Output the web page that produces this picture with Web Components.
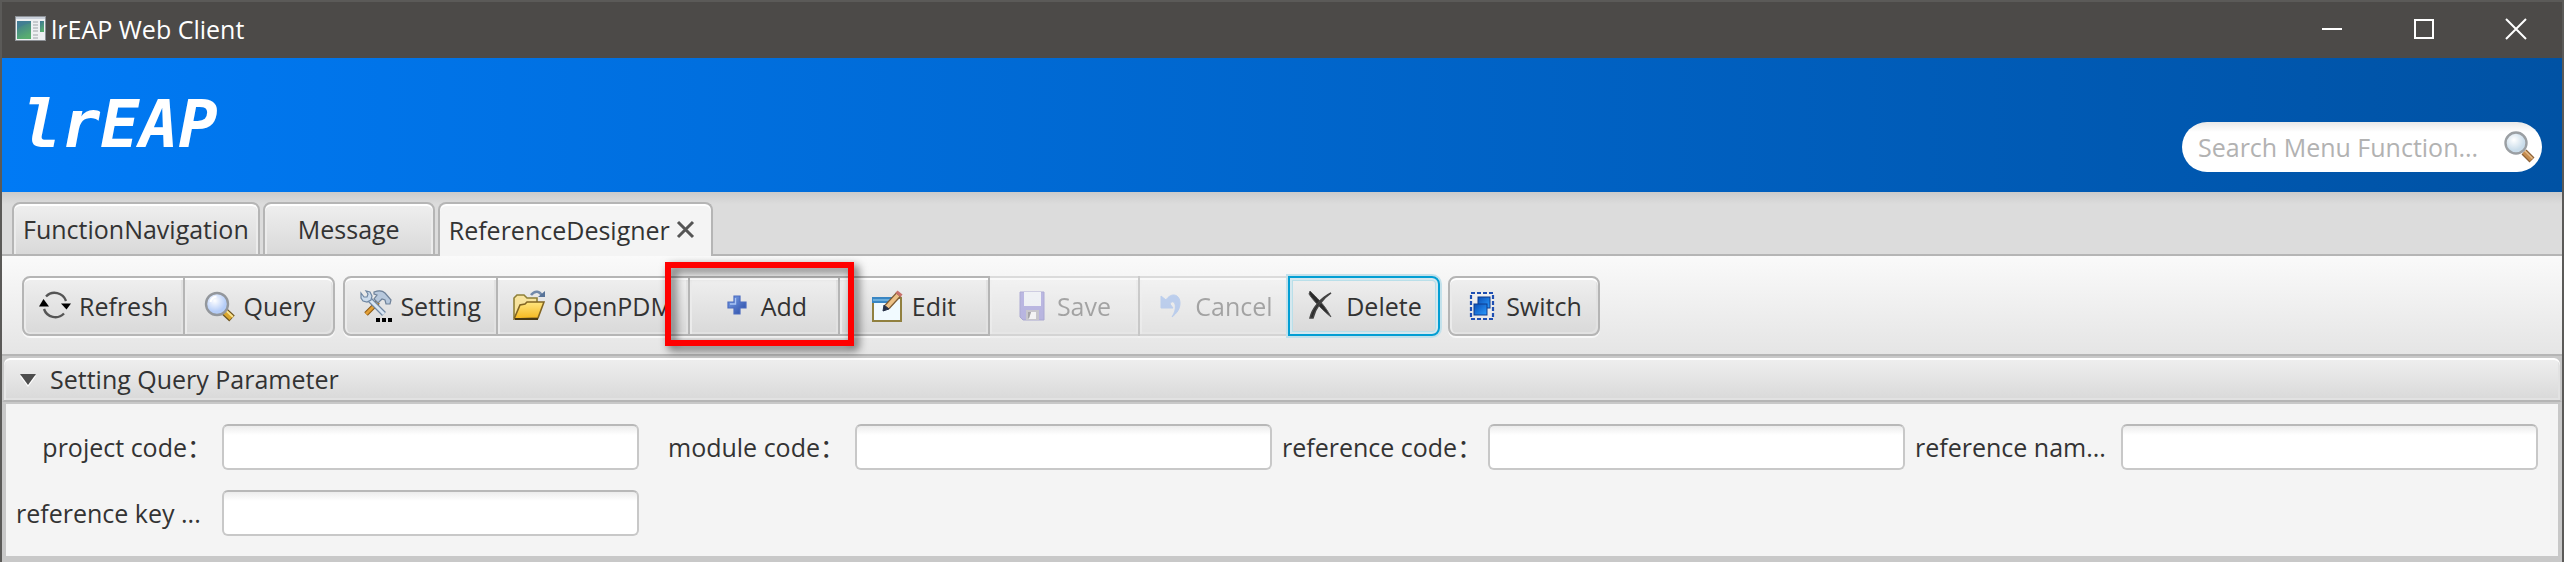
<!DOCTYPE html>
<html lang="en">
<head>
<meta charset="utf-8">
<title>lrEAP Web Client</title>
<style>
    body {
        margin: 0;
        background: #c8c8c8;
        color: #333;
        font: 25px/32px "Open Sans", "Noto Sans CJK SC", sans-serif;
    }
</style>
</head>
<body>
<app-window>
    <title-bar>lrEAP Web Client</title-bar>
    <brand-header>
        lrEAP
        <search-box slot="search" placeholder="Search Menu Function..."></search-box>
    </brand-header>
    <tab-strip>
        <tab-item>FunctionNavigation</tab-item>
        <tab-item>Message</tab-item>
        <tab-item active closable>ReferenceDesigner</tab-item>
    </tab-strip>
    <tool-bar>
        <button-group>
            <tool-button icon="refresh">Refresh</tool-button>
            <tool-button icon="query">Query</tool-button>
        </button-group>
        <button-group>
            <tool-button icon="setting">Setting</tool-button>
            <tool-button icon="open">OpenPDM</tool-button>
            <call-out><tool-button icon="add">Add</tool-button></call-out>
            <tool-button icon="edit">Edit</tool-button>
            <tool-button icon="save" disabled>Save</tool-button>
            <tool-button icon="cancel" disabled>Cancel</tool-button>
            <tool-button icon="delete" focused>Delete</tool-button>
        </button-group>
        <button-group>
            <tool-button icon="switch">Switch</tool-button>
        </button-group>
    </tool-bar>
    <titled-pane heading="Setting Query Parameter">
        <form-field label="project code："></form-field>
        <form-field label="module code："></form-field>
        <form-field label="reference code："></form-field>
        <form-field label="reference nam..." clipped></form-field>
        <form-field label="reference key ..." clipped></form-field>
    </titled-pane>
</app-window>

<script>
// Icon drawings, all on a 32x32 grid
const ICONS = {
    app: `
        <rect x="0.5" y="3.5" width="30" height="24" fill="#eef0f2" stroke="#8d9196"/>
        <rect x="1" y="4" width="29" height="2" fill="#c9d0da"/>
        <linearGradient id="a" x2="0.4" y2="1"><stop stop-color="#3d7595"/><stop offset="1" stop-color="#58ad70"/></linearGradient>
        <rect x="2" y="8" width="14" height="18" fill="url(#a)"/>
        <path d="M2 17C5 13 9 11 16 10V8H2z" fill="#417c95" opacity="0.7"/>
        <path d="M18 9h5M18 12h5M18 15h5M18 18h5M18 22h5M18 25h5" stroke="#b9bdc1" stroke-width="1.5"/>
        <rect x="25" y="8" width="4" height="11" fill="url(#a)"/>`,
    refresh: `
        <g fill="none" stroke="#555" stroke-width="2.4">
            <path d="M7 6.500A12 12 0 0 1 27 11"/>
            <path d="M25 23.500A12 12 0 0 1 5 19"/>
        </g>
        <path d="M22 13.500h10l-4.500 6z" fill="#000"/>
        <path d="M0 16.500h10L4.500 9z" fill="#000"/>`,
    query: `
        <radialGradient id="q" cx="0.4" cy="0.35"><stop stop-color="#fff"/><stop offset="1" stop-color="#b5cdf8"/></radialGradient>
        <path d="M20.500 21.500l7.500 7" stroke="#6e5520" stroke-width="8"/>
        <path d="M20.500 21.500l7 6.500" stroke="#d9a62e" stroke-width="5.5"/>
        <path d="M21 19.500l8 7.500" stroke="#fae391" stroke-width="1.8"/>
        <circle cx="13" cy="14" r="11" fill="url(#q)" stroke="#93979c" stroke-width="2.4"/>
        <path d="M6.500 12a7 7 0 0 1 6-5.500" fill="none" stroke="#fff" stroke-width="2"/>`,
    search: `
        <radialGradient id="s" cx="0.4" cy="0.35"><stop stop-color="#fff"/><stop offset="1" stop-color="#c9dcea"/></radialGradient>
        <path d="M20 21l8 8" stroke="#8d6238" stroke-width="7"/>
        <path d="M20 21l7.500 7.500" stroke="#c68d50" stroke-width="4.5"/>
        <path d="M20.500 19.500l8 8" stroke="#e6bd8c" stroke-width="1.5"/>
        <circle cx="12" cy="12" r="10.500" fill="url(#s)" stroke="#9b9fa3" stroke-width="2.4"/>`,
    setting: `
        <path d="M18 12L6 24" stroke="#8d5a14" stroke-width="5"/>
        <path d="M18 12L6 24" stroke="#e3a037" stroke-width="2.800"/>
        <path d="M14 2c5-2 8-2 11 1l6 7-1 4h-4l-1-4-3-1-4 4-4-4 3-4-3-1z" fill="#b7c8dc" stroke="#6f8299" stroke-width="1.200"/>
        <path d="M9 9l15 15" stroke="#6f87a3" stroke-width="5.500"/>
        <path d="M9 9l15 15" stroke="#d9e6f3" stroke-width="3"/>
        <path d="M1 3l3 4h3l1-3-2-3 4 1 2 4-1 4-4 2-4-1-2-3z" fill="#cbdbec" stroke="#6f87a3" stroke-width="1.200"/>
        <path d="M16 28h4v4h-4zM22 28h4v4h-4zM28 28h4v4h-4z" fill="#000"/>`,
    open: `
        <linearGradient id="o" x2="0" y2="1"><stop stop-color="#ffe680"/><stop offset="1" stop-color="#f5b71c"/></linearGradient>
        <path d="M1 28V8l3-3h7l3 3h10v8" fill="#f7e39d" stroke="#8f8038" stroke-width="1.600"/>
        <path d="M1 29l6-14 5-1 2-2h17l-6 16z" fill="url(#o)" stroke="#826522" stroke-width="1.600"/>
        <path d="M2 29h23" stroke="#493913" stroke-width="2"/>
        <path d="M18 5c4-5 9-4 11 1" fill="none" stroke="#7189aa" stroke-width="2.600"/>
        <path d="M25 7h7V1z" fill="#587398"/>`,
    add: `
        <linearGradient id="p" x2="1" y2="1"><stop stop-color="#7da4ea"/><stop offset="1" stop-color="#2748a4"/></linearGradient>
        <path d="M13 6h6v6h6v6h-6v6h-6v-6H7v-6h6z" fill="url(#p)" stroke="#4c6cc0" stroke-width="1.200"/>
        <path d="M14.500 8v6H9" fill="none" stroke="#a8c3f4" stroke-width="1.400"/>`,
    edit: `
        <rect x="1" y="8" width="28" height="23" fill="#f1faff" stroke="#91803f" stroke-width="2"/>
        <rect x="0" y="7" width="22" height="6" fill="#3986c3"/>
        <path d="M1 10h21" stroke="#7dbbe4" stroke-width="1.500"/>
        <path d="M15 17L27 4" stroke="#7f5b32" stroke-width="6.500"/>
        <path d="M15 17L26 5" stroke="#edc187" stroke-width="4"/>
        <path d="M26 5l2-2.500" stroke="#c8716b" stroke-width="6.500"/>
        <path d="M11 21l1-6 5 4z" fill="#252f45" stroke="#252f45"/>`,
    save: `
        <path d="M3 2h24v28H6l-3-3z" fill="#6a62cc" stroke="#4a45a8"/>
        <path d="M7 2h17v14H7z" fill="#edf1fb"/>
        <path d="M9 20h13v10H9z" fill="#918e9b"/>
        <path d="M14 22l5 0v7h-7z" fill="#fff"/>
        <path d="M11 22h3l-2 6h-1z" fill="#3a383f"/>`,
    cancel: `
        <path d="M11 10c5-8 14-6 14 3 0 6-3 10-8 14 3-5 4-9 3-13-1-3-4-3-5 0l3 4H6V6z" fill="#6f9ce8" stroke="#6f9ce8"/>`,
    delete: `
        <path d="M4 1c6 6 15 14 21 26-6-5-17-15-22-23z" fill="#2b2b2b" stroke="#555"/>
        <path d="M25 3C16 9 9 19 7 28l-3 0C6 18 15 8 25 3z" fill="#2b2b2b" stroke="#444" stroke-width="1.500"/>`,
    switch: `
        <linearGradient id="w" x2="1" y2="1"><stop stop-color="#0c4eb4"/><stop offset="1" stop-color="#2a9cff"/></linearGradient>
        <rect x="5" y="3" width="22" height="26" fill="#fff" fill-opacity="0.3" stroke="#1f4fb2" stroke-width="2.200" stroke-dasharray="4 2"/>
        <rect x="12" y="7" width="12" height="11" fill="url(#w)" stroke="#0e3c8f"/>
        <rect x="8" y="14" width="13" height="11" fill="url(#w)" stroke="#0e3c8f"/>`,
    minimize: `<path d="M6 16h20" stroke="#fff" stroke-width="2"/>`,
    maximize: `<path d="M7 7h18v18H7z" fill="none" stroke="#fff" stroke-width="2"/>`,
    close: `<path d="M6 6l20 20M26 6L6 26" stroke="#fff" stroke-width="2"/>`,
    cross: `<path d="M8 8l15 15M23 8L8 23" stroke="#555" stroke-width="3"/>`,
    arrow: `<path d="M8 13h16l-8 11z" fill="#fff"/><path d="M8 11h16l-8 11z" fill="#4d4d4d"/>`
};

// Base class: puts the markup of render() into an open shadow root
class BaseElement extends HTMLElement {
    constructor() {
        super();
        this.attachShadow({ mode: 'open' });
    }

    connectedCallback() {
        this.shadowRoot.innerHTML = this.render();
    }
}

class AppIcon extends BaseElement {
    render() {
        return `
        <style>
        :host { display: block; flex: none; width: 32px; height: 32px; }
        svg { display: block; width: 100%; height: 100%; }
        </style>
        <svg viewBox="0 0 32 32" aria-hidden="true">${ICONS[this.getAttribute('name')]}</svg>`;
    }
}

class AppWindow extends BaseElement {
    render() {
        return `
        <style>
        :host {
            display: block;
            min-height: 100vh;
            box-sizing: border-box;
            border: 2px solid #5b5a58;
            border-bottom: 0;
        }
        </style>
        <slot></slot>`;
    }
}

class TitleBar extends BaseElement {
    render() {
        return `
        <style>
        :host {
            display: flex;
            height: 56px;
            background: #4c4a48;
            color: #fff;
        }
        .title {
            display: flex;
            flex: 1;
            align-items: center;
            gap: 4px;
            padding: 0 0 2px 13px;
        }
        button {
            display: grid;
            place-items: center;
            width: 92px;
            padding: 0 0 2px;
            border: 0;
            background: none;
        }
        </style>
        <div class="title"><app-icon name="app"></app-icon><span><slot></slot></span></div>
        <button aria-label="Minimize"><app-icon name="minimize"></app-icon></button>
        <button aria-label="Maximize"><app-icon name="maximize"></app-icon></button>
        <button aria-label="Close"><app-icon name="close"></app-icon></button>`;
    }
}

class BrandHeader extends BaseElement {
    render() {
        return `
        <style>
        :host {
            display: flex;
            justify-content: space-between;
            align-items: center;
            height: 134px;
            padding: 0 20px;
            box-sizing: border-box;
            background: linear-gradient(90deg, #007af5, #0052a4);
        }
        h1 {
            margin: 0;
            color: #fff;
            font: italic bold 65px/72px "DejaVu Sans Mono", monospace;
        }
        ::slotted(search-box) { align-self: flex-end; margin-bottom: 20px; }
        </style>
        <h1><slot></slot></h1>
        <slot name="search"></slot>`;
    }
}

class SearchBox extends BaseElement {
    render() {
        const text = this.getAttribute('placeholder');
        return `
        <style>
        :host {
            display: flex;
            align-items: center;
            width: 360px;
            height: 50px;
            padding: 0 6px 0 16px;
            box-sizing: border-box;
            border-radius: 25px;
            background: linear-gradient(#e8e8e8, #fff 10px);
        }
        input {
            flex: 1;
            min-width: 0;
            padding: 0;
            border: 0;
            outline: 0;
            background: none;
            font: inherit;
        }
        input::placeholder { color: #b2b2b2; opacity: 1; }
        button { padding: 0; border: 0; background: none; }
        </style>
        <input type="text" placeholder="${text}" aria-label="${text}">
        <button aria-label="Search"><app-icon name="search"></app-icon></button>`;
    }
}

class TabStrip extends BaseElement {
    render() {
        return `
        <style>
        :host {
            display: flex;
            gap: 3px;
            padding: 10px 10px 0;
            background: linear-gradient(#b5b5b5, #b5b5b5) bottom / 100% 2px no-repeat,
                linear-gradient(#cbcbcb, #dcdcdc 12px);
        }
        </style>
        <slot></slot>`;
    }
}

class TabItem extends BaseElement {
    render() {
        return `
        <style>
        :host {
            display: flex;
            justify-content: center;
            align-items: center;
            min-width: 172px;
            height: 54px;
            padding: 0 9px;
            box-sizing: border-box;
            border: 2px solid #b5b5b5;
            border-radius: 8px 8px 0 0;
            background: linear-gradient(#efefef, #d9d9d9);
            box-shadow: inset 0 2px #fff, inset 2px 0 #ececec, inset -2px 0 #ececec;
        }
        :host([active]) {
            border-bottom: 0;
            background: #f4f4f4;
            box-shadow: inset 0 2px #fff;
        }
        button {
            padding: 0;
            border: 0;
            background: none;
            color: inherit;
            font: inherit;
        }
        </style>
        <button role="tab"><slot></slot></button>
        ${this.hasAttribute('closable') ? '<button aria-label="Close tab"><app-icon name="cross"></app-icon></button>' : ''}`;
    }
}

class ToolBar extends BaseElement {
    render() {
        return `
        <style>
        :host {
            display: flex;
            position: relative;
            z-index: 1;
            gap: 8px;
            padding: 20px 20px 18px;
            border-bottom: 2px solid #b5b5b5;
            background: linear-gradient(#fafafa, #e5e5e5);
        }
        </style>
        <slot></slot>`;
    }
}

// Joins its buttons with shared borders and rounds the outer corners
class ButtonGroup extends BaseElement {
    render() {
        return `
        <style>
        :host { display: flex; }
        ::slotted(*) { --radius: 0; margin-left: -2px; }
        ::slotted(:first-child) { --radius: 8px 0 0 8px; margin-left: 0; }
        ::slotted(:last-child) { --radius: 0 8px 8px 0; }
        ::slotted(:only-child) { --radius: 8px; }
        </style>
        <slot></slot>`;
    }
}

class ToolButton extends BaseElement {
    render() {
        return `
        <style>
        :host { display: block; position: relative; z-index: 1; }
        :host([disabled]) { z-index: 0; opacity: 0.4; }
        :host([focused]) { z-index: 2; }
        button {
            display: flex;
            justify-content: center;
            align-items: center;
            gap: 8px;
            min-width: 152px;
            height: 60px;
            padding: 0 15px;
            box-sizing: border-box;
            border: 2px solid #b5b5b5;
            border-radius: var(--radius);
            background: linear-gradient(#efefef, #d9d9d9);
            box-shadow: inset 0 2px #fff, inset 2px 0 #ebebeb, inset -2px -2px #e2e2e2, 0 2px #f8f8f8;
            color: #333;
            font: inherit;
        }
        :host([focused]) button {
            border-color: #039ed3;
            box-shadow: inset 0 0 0 2px #d5e8ef, inset 0 0 0 3px #b9dfe9, 0 0 0 2px #c3e1eb;
        }
        </style>
        <button ${this.hasAttribute('disabled') ? 'disabled' : ''}>
            <app-icon name="${this.getAttribute('icon')}"></app-icon>
            <span><slot></slot></span>
        </button>`;
    }
}

// Red frame drawn over the slotted element
class CallOut extends BaseElement {
    render() {
        return `
        <style>
        :host { display: block; position: relative; z-index: 3; }
        .frame {
            position: absolute;
            inset: -14px -14px -10px -23px;
            border: 6px solid #f00;
            filter: drop-shadow(4px 4px 5px rgba(0, 0, 0, 0.65));
            pointer-events: none;
            z-index: 4;
        }
        </style>
        <slot></slot>
        <div class="frame"></div>`;
    }
}

class TitledPane extends BaseElement {
    render() {
        return `
        <style>
        :host {
            display: block;
            background: #c8c8c8;
        }
        .heading {
            display: flex;
            align-items: center;
            gap: 6px;
            width: 100%;
            height: 46px;
            padding: 0 8px;
            box-sizing: border-box;
            border: 2px solid #c8c8c8;
            border-bottom-color: #b5b5b5;
            border-radius: 8px 8px 0 0;
            background: linear-gradient(#efefef, #d9d9d9);
            box-shadow: inset 0 2px #fff, inset 2px 0 #e8e8e8, inset -2px -2px #e2e2e2;
            color: #333;
            font: inherit;
        }
        .content {
            display: grid;
            grid-template-columns: repeat(4, minmax(0, 1fr));
            gap: 20px 10px;
            margin: 2px 4px 6px;
            padding: 20px 20px 20px 10px;
            background: #f4f4f4;
        }
        </style>
        <button class="heading" aria-expanded="true">
            <app-icon name="arrow"></app-icon>
            <span>${this.getAttribute('heading')}</span>
        </button>
        <div class="content"><slot></slot></div>`;
    }
}

class FormField extends BaseElement {
    render() {
        return `
        <style>
        :host {
            display: flex;
            align-items: center;
            gap: 10px;
        }
        label {
            flex: none;
            width: 196px;
            text-align: right;
            white-space: nowrap;
        }
        :host([clipped]) label { text-align: left; }
        input {
            flex: 1;
            min-width: 0;
            height: 46px;
            padding: 0 12px;
            box-sizing: border-box;
            border: 2px solid #c8c8c8;
            border-top-color: #b8b8b8;
            border-radius: 6px;
            background: linear-gradient(#ececec, #fff 9px);
            font: inherit;
        }
        </style>
        <label for="field">${this.getAttribute('label')}</label>
        <input id="field" type="text">`;
    }
}

customElements.define('app-icon', AppIcon);
customElements.define('app-window', AppWindow);
customElements.define('title-bar', TitleBar);
customElements.define('brand-header', BrandHeader);
customElements.define('search-box', SearchBox);
customElements.define('tab-strip', TabStrip);
customElements.define('tab-item', TabItem);
customElements.define('tool-bar', ToolBar);
customElements.define('button-group', ButtonGroup);
customElements.define('tool-button', ToolButton);
customElements.define('call-out', CallOut);
customElements.define('titled-pane', TitledPane);
customElements.define('form-field', FormField);
</script>
</body>
</html>
